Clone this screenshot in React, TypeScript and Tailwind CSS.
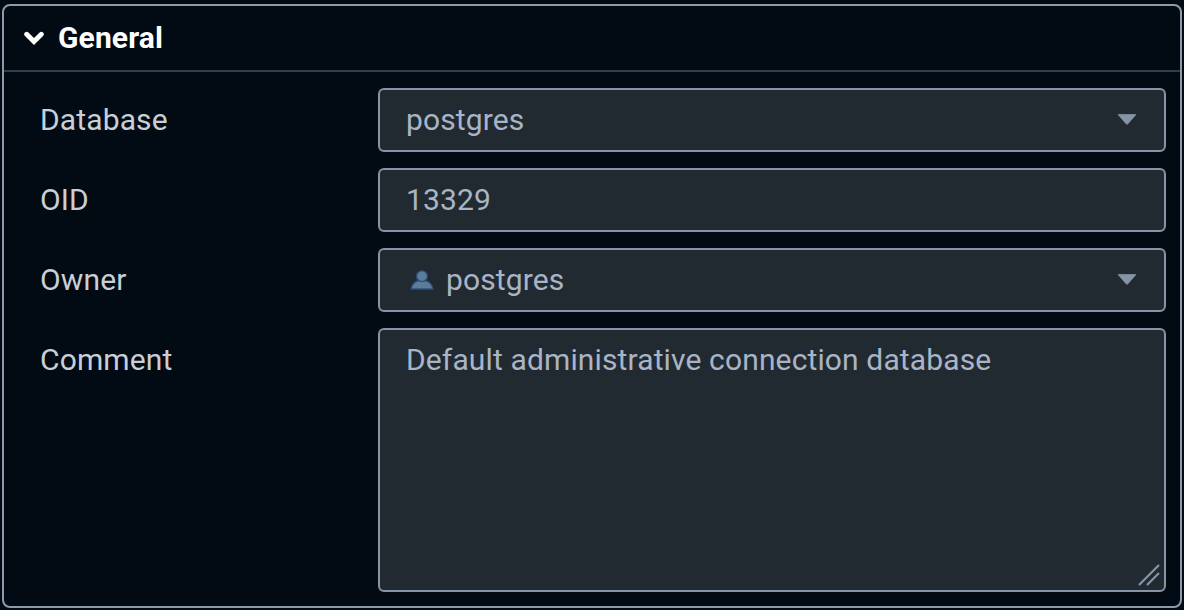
import type { ReactNode } from "react";

function Caret() {
  return (
    <svg className="mb-[2px] h-[11px] w-[20px] shrink-0" viewBox="0 0 20 11" aria-hidden="true">
      <path d="M1.1 0.6H18.9L10.9 9.8Q10 10.7 9.1 9.8Z" fill="#8595a5" stroke="#8595a5" strokeWidth="0.8" strokeLinejoin="round" />
    </svg>
  );
}

function UserIcon() {
  return (
    <svg className="mr-3 mb-[2px] ml-1 h-6 w-6 shrink-0" viewBox="0 0 24 24" aria-hidden="true">
      <path d="M1.2 22C1.9 17.2 5.4 13.3 12 13.3S22.1 17.2 22.8 22Z" fill="#5b7d99" stroke="#2c4f84" strokeWidth="1.3" />
      <circle cx="12" cy="9.2" r="5.4" fill="#5b7d99" stroke="#2c4f84" strokeWidth="1.3" />
    </svg>
  );
}

function Row({ label, children }: { label: string; children: ReactNode }) {
  return (
    <div className="flex">
      <div className="w-[338px] shrink-0 pt-[12px] leading-10 text-[#c9cfd6]">{label}</div>
      {children}
    </div>
  );
}

function Field({ children, caret = false }: { children: ReactNode; caret?: boolean }) {
  return (
    <div className="flex h-16 flex-1 items-center rounded-md border-2 border-[#8595a5] bg-[#222a31] pr-[27px] pl-[26px] leading-10">
      {children}
      {caret && (
        <span className="ml-auto flex">
          <Caret />
        </span>
      )}
    </div>
  );
}

export default function App() {
  return (
    <div className="h-[610px] w-[1184px] bg-[#020a14] px-[2px] pt-1 pb-[2px] font-[Roboto,sans-serif] text-[30px] tracking-[0.13px] text-[#a9b5c6]">
      <section className="h-full rounded-lg border-2 border-[#8b9bac]">
        <header className="flex h-[66px] items-center border-b-2 border-[#323e4a] pl-5 text-white">
          <svg className="h-[14px] w-[20px]" viewBox="0 0 20 14" aria-hidden="true">
            <path d="M2.7 3.3L10 10.5L17.3 3.3" fill="none" stroke="currentColor" strokeWidth="4.9" strokeLinecap="round" />
          </svg>
          <h2 className="ml-[14px] text-[30px] leading-10 font-bold tracking-[0.13px]">General</h2>
        </header>
        <div className="flex flex-col gap-4 pt-4 pr-[14px] pl-9">
          <Row label="Database">
            <Field caret>postgres</Field>
          </Row>
          <Row label="OID">
            <Field>13329</Field>
          </Row>
          <Row label="Owner">
            <Field caret>
              <UserIcon />
              postgres
            </Field>
          </Row>
          <Row label="Comment">
            <div className="flex h-[264px] flex-1 flex-col justify-between rounded-md border-2 border-[#8595a5] bg-[#222a31] pt-[10px] pl-[26px]">
              <p className="leading-10">Default administrative connection database</p>
              <svg className="mr-[3px] mb-[3px] h-6 w-6 self-end" viewBox="0 0 24 24" aria-hidden="true">
                <path d="M2 22L22 2M10 22L22 10" fill="none" stroke="#8595a5" strokeWidth="2.2" />
              </svg>
            </div>
          </Row>
        </div>
      </section>
    </div>
  );
}
